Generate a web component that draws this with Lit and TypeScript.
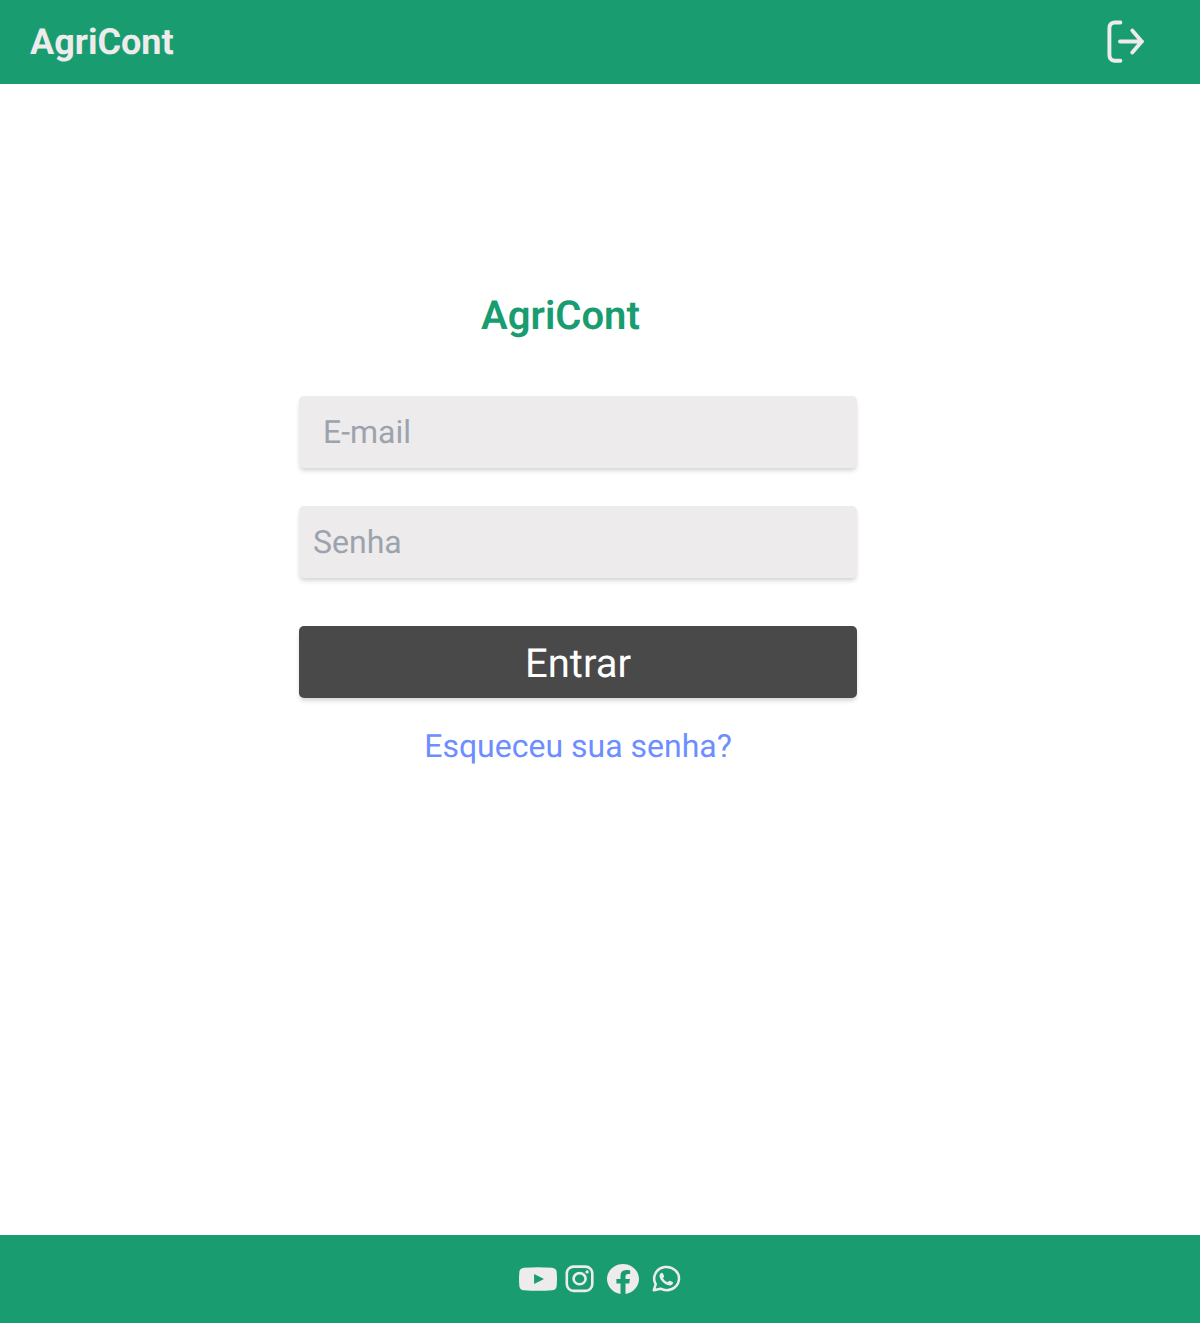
import { LitElement, html, css } from "lit";
import { customElement } from "lit/decorators.js";

@customElement("app-root")
export class AppRoot extends LitElement {
  static styles = css`
    :host {
      display: flex;
      flex-direction: column;
      min-height: 100vh;
      background: #fff;
      font-family: Roboto, "Liberation Sans", sans-serif;
      text-rendering: geometricPrecision;
    }
    * {
      box-sizing: border-box;
    }
    svg {
      display: block;
      flex: none;
      overflow: visible;
    }
    .header {
      height: 84px;
      display: flex;
      align-items: center;
      justify-content: space-between;
      padding: 0 55px 0 30px;
      background: #199d70;
      color: #edebeb;
    }
    .brand {
      font-size: 36px;
      line-height: 42px;
      font-weight: 700;
    }
    .logout {
      padding: 0;
      border: 0;
      background: none;
      color: inherit;
    }
    .main {
      flex: 1;
      display: flex;
      flex-direction: column;
      padding: 208px 0 0 299px;
    }
    .form {
      width: 558px;
      display: flex;
      flex-direction: column;
    }
    .title {
      margin: 0 35px 57px 0;
      text-align: center;
      font-size: 40px;
      line-height: 47px;
      font-weight: 600;
      color: #199d70;
    }
    .field,
    .submit {
      display: block;
      width: 100%;
      height: 72px;
      border: 0;
      border-radius: 5px;
      box-shadow: 0 4px 5px -1px rgba(0, 0, 0, 0.12), 0 2px 4px -1px rgba(0, 0, 0, 0.08);
      font-family: inherit;
      text-rendering: inherit;
    }
    .field {
      margin-bottom: 38px;
      padding: 0 14px;
      background: #edebeb;
      font-size: 32px;
      outline: none;
    }
    .email {
      padding-left: 24px;
    }
    .password {
      margin-bottom: 48px;
    }
    .field::placeholder {
      color: #9ca3af;
      opacity: 1;
    }
    .submit {
      padding: 2px 0 0;
      background: #494949;
      color: #fff;
      font-size: 40px;
    }
    .forgot {
      align-self: center;
      margin-top: 29px;
      font-size: 32px;
      line-height: 38px;
      color: #6c8eff;
      text-decoration: none;
    }
    .footer {
      height: 88px;
      display: flex;
      align-items: center;
      justify-content: center;
      background: #199d70;
      color: #edebeb;
    }
    .instagram {
      margin-left: 8px;
    }
    .facebook {
      margin-left: 13px;
    }
    .whatsapp {
      margin-left: 13px;
    }
  `;

  render() {
    return html`
      <header class="header">
        <div class="brand">AgriCont</div>
        <button class="logout" aria-label="Sair">
          <svg width="38" height="44" viewBox="0 0 38 44" fill="none" stroke="currentColor" stroke-width="3.9" stroke-linecap="round" stroke-linejoin="round">
            <path d="M13.4 2.5H7.6Q2.4 2.9 2.4 8.1V34.9Q2.4 40.1 7.6 40.7H13.4M13 21.5H35M25.3 10.6L34.7 21.5L25.3 32.4" />
          </svg>
        </button>
      </header>
      <main class="main">
        <form class="form">
          <h1 class="title">AgriCont</h1>
          <input class="field email" type="email" placeholder="E-mail" />
          <input class="field password" type="password" placeholder="Senha" />
          <button class="submit" type="button">Entrar</button>
          <a class="forgot" href="#">Esqueceu sua senha?</a>
        </form>
      </main>
      <footer class="footer">
        <svg class="youtube" width="38" height="24" viewBox="0 0 38 24" fill="currentColor">
          <path fill-rule="evenodd" d="M5 .7Q19-.4 33 .7Q37 1.1 37.6 4.5Q38.4 12 37.6 19.5Q37 22.9 33 23.3Q19 24.4 5 23.3Q1 22.9.4 19.5Q-.4 12 .4 4.5Q1 1.1 5 .7ZM15.1 7V17L25 12Z" />
        </svg>
        <svg class="instagram" width="29" height="27" viewBox="0 0.6 29 27" fill="none" stroke="currentColor" stroke-width="2.6">
          <rect x="1.8" y="1.25" width="25.5" height="24.2" rx="6.8" />
          <ellipse cx="14.6" cy="13.3" rx="6" ry="5.6" />
          <circle cx="22.1" cy="6.5" r="1.7" fill="currentColor" stroke="none" />
        </svg>
        <svg class="facebook" width="32" height="30" viewBox="0 0 16 16" preserveAspectRatio="none" fill="currentColor">
          <path d="M16 8.049c0-4.446-3.582-8.05-8-8.05C3.58 0-.002 3.603-.002 8.05c0 4.017 2.926 7.347 6.75 7.951v-5.625h-2.03V8.05H6.75V6.275c0-2.017 1.195-3.131 3.022-3.131.876 0 1.791.157 1.791.157v1.98h-1.009c-.993 0-1.303.621-1.303 1.258v1.51h2.218l-.354 2.326H9.25V16c3.824-.604 6.75-3.934 6.75-7.951" />
        </svg>
        <svg class="whatsapp" width="29" height="27" viewBox="0.3 0.5 29 27">
          <path d="M2.1 24.8L4 18.6A12.4 11.6 0 1 1 8.9 23.2Z" fill="none" stroke="currentColor" stroke-width="2.5" stroke-linejoin="round" />
          <path transform="translate(0 .4)" d="M9.1 7.3C9.8 6.6 10.7 6.6 11.1 7.3L12.4 10.1C12.7 10.9 11.6 11.7 11.3 12.3C12.3 14.1 13.8 15.5 16 16.3C16.7 15.8 17.3 14.6 18.1 14.8L21 16.1C21.7 16.6 21.3 17.8 20.6 18.5C18.6 20.4 15.4 19.3 12.9 17.6C10.7 16 8.9 13.8 8.1 11.6C7.5 9.9 7.9 8.3 9.1 7.3Z" fill="currentColor" />
        </svg>
      </footer>
    `;
  }
}
